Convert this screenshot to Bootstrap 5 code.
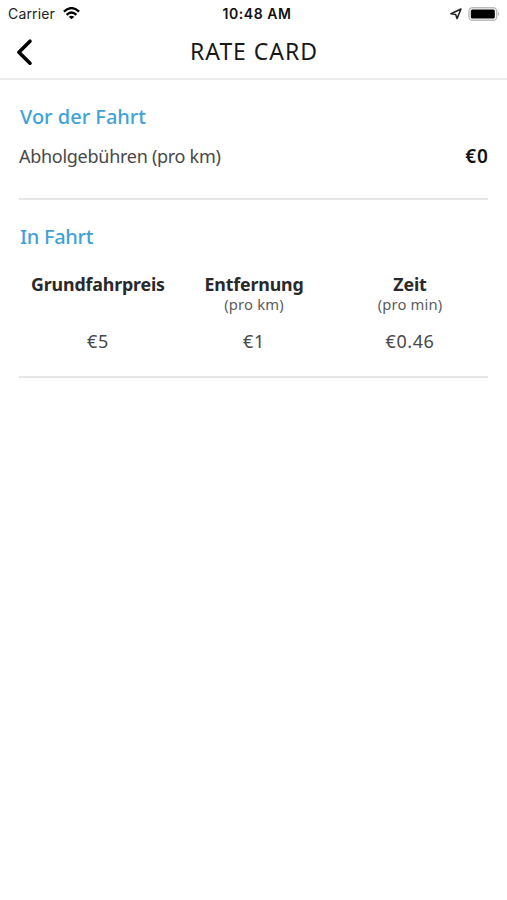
<!DOCTYPE html>
<html lang="de">
<head>
<meta charset="utf-8">
<meta name="viewport" content="width=device-width, initial-scale=1">
<title>Rate Card</title>
<link href="https://cdn.jsdelivr.net/npm/bootstrap@5.3.0/dist/css/bootstrap.min.css" rel="stylesheet">
<style>
body{font-family:"Noto Sans",sans-serif;color:#484848;background:#fff;min-height:100vh}
.status{height:27px;padding:0 7px 0 8px;font-family:Inter,sans-serif;font-size:14px;line-height:27px;color:#222}
.status svg,.topbar svg{display:block}
.carrier{letter-spacing:.15px}
.clock{font-weight:600;font-size:14px;letter-spacing:.55px;color:#111;padding-left:6px}
.topbar{height:53px;padding:0 16px;border-bottom:2px solid #ececec;color:#000}
.screen-title{font-size:23px;line-height:47px;letter-spacing:.95px;padding:0 0 3px 1px;color:#181818;font-weight:400}
.back{padding-bottom:1px}
.rates{padding:0 19px 0 19px}
.rule{border-bottom:2px solid #e6e6e6}
.before{height:120px;padding-top:22px}
.during{height:178px;padding-top:22px}
.heading{font-size:20px;line-height:30px;font-weight:500;padding-left:1px;color:#3fa2d9}
.heading-tight{letter-spacing:-.3px}
.fee{font-size:18px;line-height:26px;margin-top:11px}
.fee-name{letter-spacing:-.28px}
.amount{color:#111;font-weight:600;font-size:19px;letter-spacing:1px;margin-right:-1px}
.prices{margin-top:20px;padding-left:1px}
.label{font-size:17.8px;line-height:24px;font-weight:700;letter-spacing:-.15px;color:#292929}
.unit{font-size:14.8px;line-height:16px;height:17px;letter-spacing:.15px;color:#5c5c5c}
.value{font-size:18px;line-height:26px;margin-top:15px;letter-spacing:.6px}
</style>
<script src="https://cdn.jsdelivr.net/npm/bootstrap@5.3.0/dist/js/bootstrap.bundle.min.js"></script>
</head>
<body>
<div class="status row g-0 align-items-center">
  <div class="col d-flex align-items-center"><span class="carrier">Carrier</span>
    <svg class="ms-2" width="17" height="13" viewBox="0 0 17 13" fill="none" stroke="#000" stroke-width="2.3"><path d="M.9 4.6Q8.5-2.4 16.1 4.6M3.6 7.8Q8.5 3.2 13.4 7.8"/><path d="M8.5 12.3 5.7 9.7Q8.5 7.6 11.3 9.7Z" fill="#000" stroke="none"/></svg>
  </div>
  <div class="col-auto clock">10:48 AM</div>
  <div class="col d-flex justify-content-end align-items-center gap-2">
    <svg width="12" height="12" viewBox="0 0 12 12" fill="none" stroke="#222" stroke-width="1.5" stroke-linejoin="round" transform="translate(2 0)"><path d="M11 1 7 10.6 5.7 6.6 1 5.8Z"/></svg>
    <svg width="32" height="14" viewBox="0 0 32 14"><rect x=".9" y=".7" width="27.8" height="12.6" rx="3.6" fill="#fff" stroke="#bbb" stroke-width="1.4"/><rect x="2.8" y="2.5" width="24" height="9" rx="1.5"/><path d="M30 4.8q2 2.2 0 4.4z" fill="#aaa"/></svg>
  </div>
</div>
<header class="topbar row g-0 align-items-center">
  <div class="col back"><svg width="17" height="28" viewBox="0 0 17 28" fill="none" stroke="#000" stroke-width="3.6" stroke-linecap="round" stroke-linejoin="round"><path d="M14 3.2 2.9 14.2 14 25.2"/></svg></div>
  <h1 class="col-auto screen-title m-0">RATE CARD</h1>
  <div class="col"></div>
</header>
<main class="rates">
  <section class="before rule">
    <h2 class="heading mb-0">Vor der Fahrt</h2>
    <div class="fee d-flex justify-content-between"><span class="fee-name">Abholgebühren (pro km)</span><span class="amount">€0</span></div>
  </section>
  <section class="during rule">
    <h2 class="heading heading-tight mb-0">In Fahrt</h2>
    <div class="prices row g-0 text-center">
      <div class="col"><div class="label">Grundfahrpreis</div><div class="unit"></div><div class="value">€5</div></div>
      <div class="col"><div class="label">Entfernung</div><div class="unit">(pro km)</div><div class="value">€1</div></div>
      <div class="col"><div class="label">Zeit</div><div class="unit">(pro min)</div><div class="value">€0.46</div></div>
    </div>
  </section>
</main>
</body>
</html>
